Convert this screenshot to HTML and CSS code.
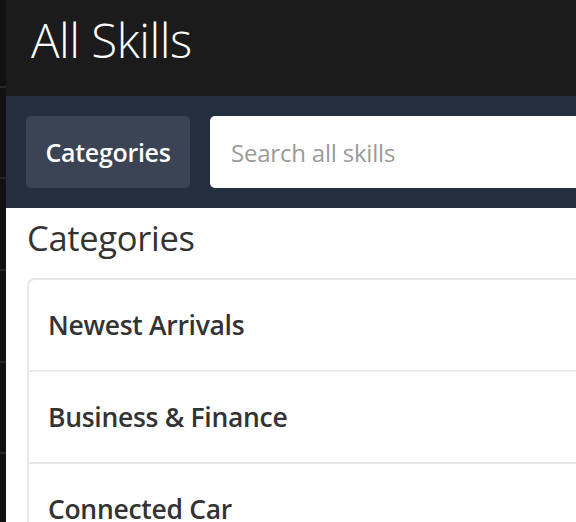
FILE: index.html
```html
<!DOCTYPE html>
<html>
<head>
<meta charset="utf-8">
<link rel="stylesheet" href="styles.css">
</head>
<body>
<div class="rail">
  <div class="rail-item"></div>
  <div class="rail-item"></div>
  <div class="rail-item"></div>
  <div class="rail-item"></div>
  <div class="rail-item"></div>
  <div class="rail-item"></div>
</div>
<div class="main">
  <header class="top">
    <h1 class="title">All Skills</h1>
  </header>
  <div class="searchbar">
    <button class="cat-btn">Categories</button>
    <div class="search"><span class="placeholder">Search all skills</span></div>
  </div>
  <section class="content">
    <h2 class="heading">Categories</h2>
    <ul class="list">
      <li class="row">Newest Arrivals</li>
      <li class="row">Business &amp; Finance</li>
      <li class="row">Connected Car</li>
    </ul>
  </section>
</div>
</body>
</html>
```
FILE: styles.css
```css
html, body {
  margin: 0;
  padding: 0;
  height: 100%;
  overflow: hidden;
}
body {
  display: flex;
  background: #111111;
  font-family: "Open Sans", "Noto Sans", sans-serif;
}
.rail {
  width: 6px;
  flex: none;
  background: #111111;
  margin-top: -4px;
}
.rail-item {
  height: 89.7px;
  border-bottom: 2px solid #262626;
}
.main {
  flex: 1;
  display: flex;
  flex-direction: column;
  background: #ffffff;
  min-width: 0;
}
.top {
  flex: none;
  height: 96px;
  background: #1b1b1b;
  padding-left: 25px;
  box-sizing: border-box;
}
.title {
  margin: 0;
  padding-top: 10px;
  color: #ffffff;
  font-weight: 300;
  font-size: 47.5px;
  line-height: 60px;
  letter-spacing: -0.5px;
}
.searchbar {
  flex: none;
  height: 112px;
  box-sizing: border-box;
  background: #232f3e;
  padding: 20px 0 20px 20px;
  display: flex;
  gap: 20px;
}
.cat-btn {
  width: 164px;
  height: 72px;
  border: none;
  border-radius: 5px;
  background: #3a4454;
  color: #ffffff;
  font-family: inherit;
  font-weight: 600;
  font-size: 25px;
  padding: 0;
  letter-spacing: -0.3px;
}
.search {
  flex: 1;
  height: 72px;
  background: #ffffff;
  border-radius: 5px 0 0 5px;
  display: flex;
  align-items: center;
  padding-left: 21px;
}
.placeholder {
  color: #9a9a9a;
  font-size: 24px;
  letter-spacing: -0.2px;
}
.content {
  flex: none;
  padding-left: 21px;
  background: #ffffff;
}
.heading {
  margin: 0;
  padding-top: 8px;
  height: 70px;
  box-sizing: border-box;
  color: #333333;
  font-weight: 400;
  font-size: 34.5px;
  line-height: 44px;
  letter-spacing: -0.3px;
}
.list {
  list-style: none;
  margin: 0;
  padding: 0;
  border: 2px solid #e7e9e9;
  border-right: none;
  border-radius: 8px 0 0 0;
}
.row {
  height: 90px;
  display: flex;
  align-items: center;
  padding-left: 19px;
  color: #333333;
  font-weight: 600;
  font-size: 26.5px;
  letter-spacing: -0.3px;
  border-bottom: 2px solid #e7e9e9;
}
```
